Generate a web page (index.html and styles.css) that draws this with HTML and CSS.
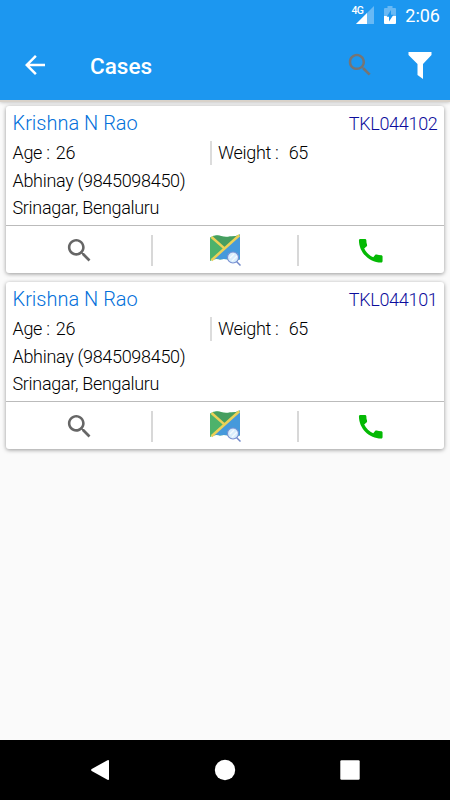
FILE: index.html
```html
<!DOCTYPE html>
<html lang="en">
<head>
<meta charset="utf-8">
<title>Cases</title>
<link rel="stylesheet" href="styles.css">
</head>
<body>
<svg class="defs" width="0" height="0">
  <symbol id="search" viewBox="0 0 24 24"><path d="M15.500 14h-.79l-.28-.27C15.410 12.590 16 11.110 16 9.500 16 5.910 13.090 3 9.500 3S3 5.910 3 9.500 5.910 16 9.500 16c1.610 0 3.090-.59 4.230-1.570l.27.28v.79l5 4.990L20.490 19l-4.990-5zm-6 0C7.010 14 5 11.990 5 9.500S7.010 5 9.500 5 14 7.010 14 9.500 11.990 14 9.500 14z"/></symbol>
  <symbol id="phone" viewBox="0 0 24 24"><path d="M20.010 15.380c-1.230 0-2.420-.2-3.530-.56-.35-.12-.74-.03-1.010.24l-1.570 1.970c-2.830-1.350-5.480-3.900-6.890-6.830l1.950-1.660c.27-.28.35-.67.24-1.020-.37-1.110-.56-2.300-.56-3.530 0-.54-.45-.99-.99-.99H4.190C3.650 3 3 3.240 3 3.990 3 13.280 10.730 21 20.010 21c.71 0 .99-.63.99-1.180v-3.450c0-.54-.45-.99-.99-.99z"/></symbol>
  <symbol id="map" viewBox="0 0 32 32">
    <path d="M1 3.500Q6 .3 11 1.800T21 2.400Q26 3 31 .5V25.200Q26 28 21 26.200T11 25.500Q6 24 1 27z" fill="#4db26b"/>
    <path d="M11 1.800Q16 4 21 2.400Q26 3 31 .5L16 14.700 4 3Q7 1 11 1.800z" fill="#469e60"/>
    <path d="M31 .5V25.200Q26 28 21 26.200T11 25.500Q8 24 4.500 25.600z" fill="#4599db"/>
    <path d="M2.500 3 15.700 14.600M2.500 26.200 30.300 1.300" fill="none" stroke="#ecd157" stroke-width="2.500"/>
    <path d="m27 27 4.500 4.500" stroke="#7188c9" stroke-width="1.500"/>
    <circle cx="24" cy="23.500" r="5.500" fill="#d8edfc" stroke="#7890d2" stroke-width="1.100"/>
    <path d="m21 24 4-4m-2 7 5-5" stroke="#f4faff" stroke-width="1.300"/>
  </symbol>
</svg>
<header class="top">
  <div class="status">
    <svg class="signal" viewBox="0 0 18 18"><path d="M18 0v18H0z" fill="#68b9f5"/><path d="M11 7v11H0z" fill="#fff"/></svg>
    <span class="net">4G</span>
    <svg class="battery" viewBox="0 0 12 18"><path d="M1 2h2.500V0h5v2H11q1 0 1 1v7H0V3q0-1 1-1z" fill="#68b9f5"/><path d="M0 10h12v7q0 1-1 1H1q-1 0-1-1z" fill="#fff"/><path d="M7 4v4.700h2.500L5 15.500v-4.800H2.700z" fill="#1c97f0"/></svg>
    <span class="clock">2:06</span>
  </div>
  <div class="bar">
    <svg class="back" viewBox="0 0 24 24"><path d="M20 11H7.830l5.590-5.590L12 4l-8 8 8 8 1.410-1.410L7.830 13H20z"/></svg>
    <h1>Cases</h1>
    <svg class="find"><use href="#search"/></svg>
    <svg class="filter" viewBox="0 0 24 27"><path d="M.5 0h23v3L15 12v15l-5.500-4V12L.5 3z"/></svg>
  </div>
</header>
<main>
  <article class="card">
    <div class="info">
      <div class="title"><span class="name">Krishna N Rao</span><span class="id">TKL044102</span></div>
      <div class="row"><span class="age">Age : <b>26</b></span><span class="weight">Weight : <b>65</b></span></div>
      <div class="row"><span class="contact">Abhinay (9845098450)</span></div>
      <div class="row"><span class="place">Srinagar, Bengaluru</span></div>
    </div>
    <div class="actions">
      <div><svg class="view"><use href="#search"/></svg></div>
      <div><svg class="map"><use href="#map"/></svg></div>
      <div><svg class="call"><use href="#phone"/></svg></div>
    </div>
  </article>
  <article class="card">
    <div class="info">
      <div class="title"><span class="name">Krishna N Rao</span><span class="id">TKL044101</span></div>
      <div class="row"><span class="age">Age : <b>26</b></span><span class="weight">Weight : <b>65</b></span></div>
      <div class="row"><span class="contact">Abhinay (9845098450)</span></div>
      <div class="row"><span class="place">Srinagar, Bengaluru</span></div>
    </div>
    <div class="actions">
      <div><svg class="view"><use href="#search"/></svg></div>
      <div><svg class="map"><use href="#map"/></svg></div>
      <div><svg class="call"><use href="#phone"/></svg></div>
    </div>
  </article>
</main>
<nav>
  <svg viewBox="0 0 24 24"><path d="M21 3v18q0 1.500-1.500.8L3.700 13q-1.200-1 0-2L19.500 2.200Q21 1.500 21 3z"/></svg>
  <svg viewBox="0 0 24 24"><circle cx="12" cy="12" r="10.200"/></svg>
  <svg viewBox="0 0 24 24"><rect x="2.300" y="2.300" width="19.400" height="19.400" rx="1.200"/></svg>
</nav>
</body>
</html>
```
FILE: styles.css
```css
* { box-sizing: border-box; }
body {
  margin: 0;
  width: 450px;
  height: 800px;
  display: flex;
  flex-direction: column;
  overflow: hidden;
  background: #fafafa;
  font-family: Roboto, "Liberation Sans", sans-serif;
  color: #000;
}
svg { display: block; flex: none; }
.defs { position: absolute; }
.top {
  height: 100px;
  background: #1c97f0;
  color: #fff;
  box-shadow: 0 2px 0 #d8d2ca, 0 2px 4px rgba(0, 0, 0, .3);
}
.status {
  height: 30px;
  display: flex;
  align-items: center;
  justify-content: flex-end;
  padding-right: 10px;
  position: relative;
}
.signal { width: 18px; height: 18px; margin-right: 10px; }
.net {
  position: absolute;
  left: 351.500px;
  top: 5px;
  font-size: 10.500px;
  line-height: 11px;
  letter-spacing: -.8px;
  font-weight: 500;
}
.battery { width: 12px; height: 18px; margin-right: 9px; }
.clock { font-size: 18px; font-weight: 450; line-height: 30px; padding-top: 1px; }
.bar {
  height: 70px;
  display: flex;
  align-items: center;
  padding: 0 18px 0 20px;
}
.back { width: 30px; height: 30px; fill: #fff; }
h1 { margin: 1px 0 0 40px; font-size: 22.500px; font-weight: 500; flex: 1; }
.find { width: 30px; height: 30px; fill: #757575; margin-right: 33px; }
.filter { width: 24px; height: 27px; fill: #fff; }
main { flex: 1; padding: 6px; display: flex; flex-direction: column; gap: 9.500px; }
.card {
  height: 166.500px;
  background: #fff;
  border-radius: 3px;
  box-shadow: 0 1px 4px rgba(0, 0, 0, .4);
}
.info { height: 119px; padding: 3px 6.500px 0 6.500px; font-weight: 300; font-size: 18px; letter-spacing: -.31px; }
.title { height: 30px; display: flex; justify-content: space-between; line-height: 28px; }
.name { font-size: 20px; letter-spacing: 0; color: #0370da; }
.id { color: #0c0c9c; padding-top: 1px; }
.row { height: 27.500px; line-height: 27.500px; display: flex; }
.row b { font-weight: 300; }
.age { width: 197.500px; }
.age b { margin-left: 2px; }
.weight { position: relative; padding-left: 8px; }
.weight::before {
  content: "";
  position: absolute;
  left: 0;
  top: 2px;
  width: 2px;
  height: 24px;
  background: #dcdcdc;
}
.weight b { margin-left: 6px; }
.actions {
  height: 47.500px;
  display: grid;
  grid-template-columns: repeat(3, 1fr);
  border-top: 1px solid #bbb;
}
.actions div { display: flex; align-items: center; justify-content: center; padding-top: 2px; position: relative; }
.actions div + div::before {
  content: "";
  position: absolute;
  left: -1px;
  top: 9px;
  width: 2px;
  height: 31px;
  background: #d8d8d8;
}
.view { width: 31px; height: 31px; fill: #666; }
.map { width: 32px; height: 32px; margin-right: 1px; }
.call { width: 31.500px; height: 31.500px; fill: #04b904; }
nav {
  height: 60px;
  background: #000;
  display: flex;
  align-items: center;
  justify-content: space-between;
  padding: 0 88px;
}
nav svg { width: 24px; height: 24px; fill: #fff; }
```
